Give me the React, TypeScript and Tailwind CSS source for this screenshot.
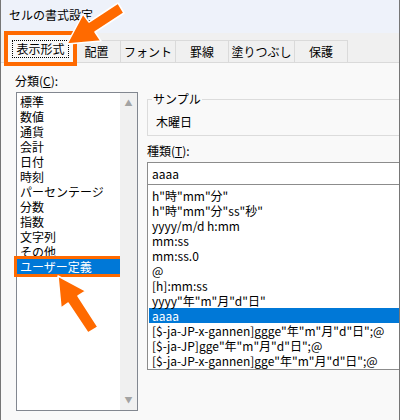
import React from "react";

const categories = [
  "標準",
  "数値",
  "通貨",
  "会計",
  "日付",
  "時刻",
  "パーセンテージ",
  "分数",
  "指数",
  "文字列",
  "その他",
  "ユーザー定義",
];

const formats = [
  'h"時"mm"分"',
  'h"時"mm"分"ss"秒"',
  "yyyy/m/d h:mm",
  "mm:ss",
  "mm:ss.0",
  "@",
  "[h]:mm:ss",
  'yyyy"年"m"月"d"日"',
  "aaaa",
  '[$-ja-JP-x-gannen]ggge"年"m"月"d"日";@',
  '[$-ja-JP]gge"年"m"月"d"日";@',
  '[$-ja-JP-x-gannen]gge"年"m"月"d"日";@',
];

const tabs = ["配置", "フォント", "罫線", "塗りつぶし", "保護"];
const tabWidths = ["w-[48px]", "w-[55px]", "w-[53px]", "w-[66px]", "w-[53px]"];

export default function App() {
  return (
    <div
      className="relative w-[400px] h-[420px] overflow-hidden bg-[#f9f9f9] border-x border-[#767676] text-black text-[12px]"
      style={{ fontFamily: '"Noto Sans CJK JP", "Noto Sans", sans-serif' }}
    >
      {/* タイトルバー */}
      <div className="h-[33px] bg-[#eef2fa] pl-[8px] pt-[7px] leading-[16px] text-[12px]">
        セルの書式設定
      </div>

      {/* タブ */}
      <div className="h-[30px] bg-[#f0f0f0] flex items-end pl-[7px] border-b border-[#dadada]">
        <div className="w-[65px] h-[27px] shrink-0 bg-[#f9f9f9] outline-[4px] outline-[#ff6a00] flex items-center justify-center">
          <div className="border border-dotted border-black px-[3px] h-[18px] leading-[16px] whitespace-nowrap">
            表示形式
          </div>
        </div>
        {tabs.map((t, i) => (
          <div
            key={t}
            className={`${tabWidths[i]} shrink-0 h-[22px] border-t border-r border-[#dadada] flex items-center justify-center leading-[16px] whitespace-nowrap`}
          >
            {t}
          </div>
        ))}
      </div>

      {/* 本体 */}
      <div className="flex gap-[9px] pl-[15px]">
        {/* 分類 */}
        <div className="w-[122px] shrink-0">
          <div className="h-[29px] pt-[10px] -ml-[1px] leading-[16px]">
            分類(<span className="underline">C</span>):
          </div>
          <div className="h-[319px] bg-white border border-[#828790] flex">
            <div className="flex-1 pt-[1px]">
              {categories.map((c) => {
                const sel = c === "ユーザー定義";
                return (
                  <div
                    key={c}
                    className={
                      sel
                        ? "h-[15px] leading-[15px] pl-[3px] bg-[#0078d7] text-white outline-[3px] outline-[#ff6a00] whitespace-nowrap"
                        : "h-[15px] leading-[15px] pl-[3px] whitespace-nowrap"
                    }
                  >
                    {c}
                  </div>
                );
              })}
            </div>
            <div className="w-[17px] bg-[#f0f0f0] flex flex-col justify-between items-center py-[5px] text-[8px] leading-[10px] text-[#a3a3a3]">
              <span>▲</span>
              <span>▼</span>
            </div>
          </div>
        </div>

        {/* 右側 */}
        <div className="w-[280px] shrink-0">
          <div className="mt-[36px] h-[37px] border border-[#dcdcdc] relative">
            <span className="absolute -top-[9px] left-[4px] px-[1px] bg-[#f9f9f9] leading-[16px]">
              サンプル
            </span>
            <div className="pt-[14px] pl-[8px] leading-[16px]">木曜日</div>
          </div>
          <div className="h-[26px] pt-[7px] leading-[16px]">
            種類(<span className="underline">T</span>):
          </div>
          <div className="h-[23px] bg-white border border-[#8c8c8c] pl-[4px] leading-[21px]">aaaa</div>
          <div className="h-[185px] bg-white border border-t-0 border-[#8c8c8c] pt-[3px] pl-[1px]">
            {formats.map((f) => {
              const sel = f === "aaaa";
              return (
                <div
                  key={f}
                  className={
                    sel
                      ? "h-[15px] leading-[15px] pl-[3px] bg-[#0078d7] text-white whitespace-nowrap"
                      : "h-[15px] leading-[15px] pl-[3px] whitespace-nowrap"
                  }
                >
                  {f}
                </div>
              );
            })}
          </div>
        </div>
      </div>

      {/* 矢印 */}
      <svg className="absolute inset-0 pointer-events-none" width="400" height="420" viewBox="0 0 400 420">
        <polygon
          points="66,44 82,14 88,22 117,3 123,13 94,32 100,41"
          fill="#ff6a00"
          stroke="#ffffff"
          strokeWidth="1.5"
          strokeLinejoin="round"
        />
        <polygon
          points="57,276 85,291 77,296 97,327 87,333 67,303 60,308"
          fill="#ff6a00"
          stroke="#ffffff"
          strokeWidth="1.5"
          strokeLinejoin="round"
        />
      </svg>
    </div>
  );
}
